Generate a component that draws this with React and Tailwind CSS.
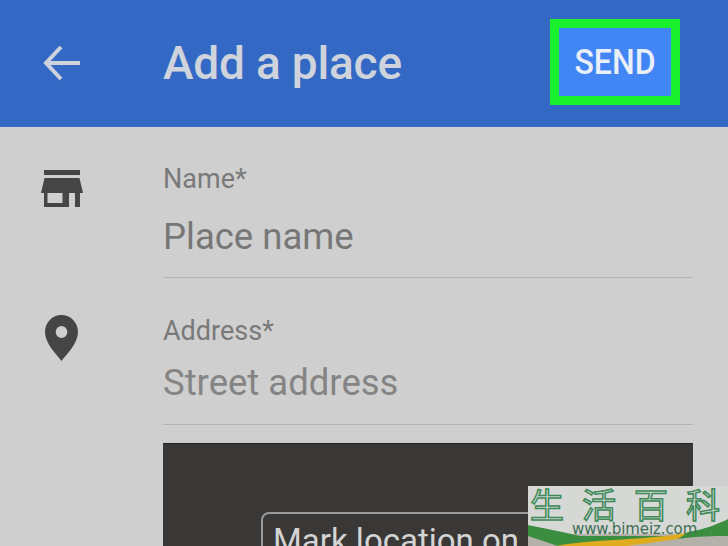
import React from "react";

const font = { fontFamily: "Roboto, sans-serif" };

const Field = ({ label, placeholder, icon, className, inputGap, lineGap, inputColor }) => (
  <div className={`flex ${className}`}>
    <div className="w-[163px] shrink-0">{icon}</div>
    <div className="w-[530px]">
      <div className="text-[27px] leading-[30px] text-[#797979]">{label}</div>
      <div className={`${inputGap} text-[36.5px] leading-[42px] ${inputColor}`}>{placeholder}</div>
      <div className={`${lineGap} h-[1px] bg-[#b4b4b4]`} />
    </div>
  </div>
);

const StoreIcon = () => (
  <svg width="42" height="38" viewBox="0 0 42 38" className="ml-[41px] mt-[6px]">
    <path d="M3 0h36v5H3z" fill="#454545" />
    <path d="M3.500 8h35L42 23H0z" fill="#454545" />
    <path fillRule="evenodd" d="M3 23h25v14H3zM6.500 23v10h15V23z" fill="#454545" />
    <path d="M34 23h5v14h-5z" fill="#454545" />
  </svg>
);

const PinIcon = () => (
  <svg width="33" height="46" viewBox="0 0 34 46" preserveAspectRatio="none" className="ml-[45px] mt-[-1px]">
    <path
      fillRule="evenodd"
      d="M17 0C7.600 0 0 7.500 0 17c0 11.500 12 22.500 17 29 5-6.500 17-17.500 17-29C34 7.500 26.400 0 17 0zm0 11a6 6 0 1 1 0 12 6 6 0 0 1 0-12z"
      fill="#454545"
    />
  </svg>
);

const Watermark = () => (
  <div className="absolute left-[528px] top-[486px] h-[60px] w-[200px] overflow-hidden bg-[#d6d8d6]">
    <svg width="200" height="60" viewBox="0 0 200 60" className="absolute left-0 top-0">
      <path d="M0 48H200V60H0z" fill="#b3b1aa" />
      <path d="M0 39C15 42 35 46 52 50L150 50L30 60L0 50z" fill="#3b8d3f" />
      <path d="M28 60C70 52 120 55 162 46L150 53C130 56 112 58 98 60z" fill="#e0ac1f" />
      <path d="M160 46C175 44 190 38 200 33V50C185 50 170 50 150 53z" fill="#3b8d3f" />
    </svg>
    <div
      className="absolute left-[2px] top-0 flex h-[34px] text-[34px] leading-[36px] text-transparent [-webkit-text-stroke:1.5px_#3d8a58]"
      style={{ fontFamily: '"Noto Sans CJK SC", sans-serif' }}
    >
      <span className="w-[52px]">生</span>
      <span className="w-[52px]">活</span>
      <span className="w-[52px]">百</span>
      <span className="w-[40px]">科</span>
    </div>
    <div
      className="absolute left-[44px] top-[36px] text-[15px] leading-[15px] tracking-[-0.1px] text-[#3f6f52]"
      style={{ fontFamily: '"DejaVu Sans", sans-serif' }}
    >
      www.bimeiz.com
    </div>
  </div>
);

export default function App() {
  return (
    <div className="relative h-[546px] w-[728px] overflow-hidden bg-[#cfcfcf]" style={font}>
      <header className="flex h-[127px] items-center bg-[#3369c4]">
        <svg width="38" height="36" viewBox="0 0 38 36" className="ml-[43px] mt-[-2px]">
          <path d="M37 18H3M18 2L3 18l15 16" fill="none" stroke="#cdd2dc" strokeWidth="4" />
        </svg>
        <h1 className="ml-[82px] mt-[-2px] text-[46px] font-medium leading-[48px] tracking-[-0.2px] text-[#cfd3dc]">
          Add a place
        </h1>
        <div className="ml-auto mr-[48px] mt-[-3px] flex h-[86px] w-[130px] items-center justify-center border-[9px] border-[#1bf02e] bg-[#4285f4]">
          <span className="scale-y-110 text-[32px] font-medium leading-none text-[#e9effb]">SEND</span>
        </div>
      </header>

      <Field
        className="pt-[37px]"
        label="Name*"
        placeholder="Place name"
        icon={<StoreIcon />}
        inputGap="mt-[22px]"
        lineGap="mt-[19px]"
        inputColor="text-[#777777]"
      />
      <Field
        className="pt-[38px]"
        label="Address*"
        placeholder="Street address"
        icon={<PinIcon />}
        inputGap="mt-[16px]"
        lineGap="mt-[20px]"
        inputColor="text-[#848484]"
      />

      <div className="ml-[163px] mt-[18px] h-[200px] w-[530px] border-t border-[#222] bg-[#3a3837] pl-[98px] pt-[68px]">
        <div className="h-[80px] w-[330px] rounded-[8px] border-2 border-[#9b9b9b] pl-[10px] pt-[7px] text-[33px] leading-[40px] text-[#d4d4d4]">
          Mark location on map
        </div>
      </div>

      <Watermark />
    </div>
  );
}
